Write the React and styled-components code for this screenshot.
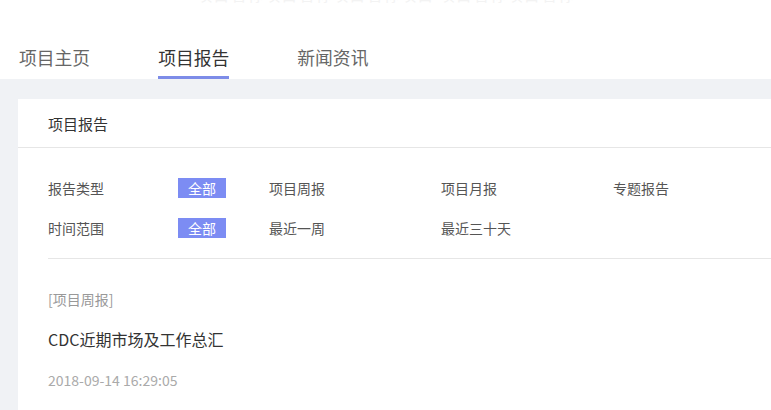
import React from "react";
import styled, { createGlobalStyle } from "styled-components";

const GlobalStyle = createGlobalStyle`
  html, body {
    margin: 0;
    padding: 0;
    background: #fff;
    overflow: hidden;
  }
  body {
    font-family: "Noto Sans CJK SC", "Noto Sans", sans-serif;
  }
`;

const Page = styled.div`
  width: 1200px;
  min-height: 410px;
  background: #f0f2f5;
`;

// the faint cut-off line of text at the very top
const Banner = styled.div`
  height: 6px;
  overflow: hidden;
  background: #fff;
  width: 771px;
  text-align: center;
`;

const BannerText = styled.div`
  margin-top: -14px;
  font-size: 16px;
  line-height: 16px;
  color: #f3f3f3;
  letter-spacing: 1px;
  white-space: nowrap;
`;

const Header = styled.div`
  height: 73px;
  background: #fff;
  display: flex;
  align-items: flex-end;
  padding-left: 19px;
  gap: 68px;
`;

const Tab = styled.div`
  font-size: 17.8px;
  line-height: 24px;
  padding-bottom: 7px;
  color: ${(p) => (p.active ? "#333" : "#666")};
  border-bottom: 3px solid ${(p) => (p.active ? "#7d8ce8" : "transparent")};
`;

const Card = styled.div`
  margin: 20px 0 0 18px;
  background: #fff;
  min-height: 320px;
`;

const CardHeader = styled.div`
  height: 48px;
  display: flex;
  align-items: center;
  padding-left: 30px;
  font-size: 15px;
  color: #333;
  border-bottom: 1px solid #e6e6e6;
`;

const Body = styled.div`
  padding: 0 30px;
`;

const Filters = styled.div`
  padding: 20px 0 10px;
  border-bottom: 1px solid #e6e6e6;
`;

const FilterRow = styled.div`
  display: grid;
  grid-template-columns: 130px 91px 172px 172px 172px;
  align-items: center;
  height: 40px;
  font-size: 14px;
  color: #555;
`;

const Badge = styled.span`
  display: inline-flex;
  align-items: center;
  justify-content: center;
  width: 48px;
  height: 20px;
  background: #7c8cf3;
  color: #fff;
  font-size: 14px;
`;

const Option = styled.span`
  color: #555;
`;

const Item = styled.div`
  padding-top: 30px;
`;

const ItemTag = styled.div`
  font-size: 14px;
  line-height: 20px;
  color: #999;
`;

const ItemTitle = styled.div`
  margin-top: 20px;
  font-size: 16px;
  line-height: 20px;
  color: #333;
`;

const ItemDate = styled.div`
  margin-top: 21px;
  font-size: 14px;
  line-height: 20px;
  color: #aaa;
`;

const filters = [
  { label: "报告类型", options: ["项目周报", "项目月报", "专题报告"] },
  { label: "时间范围", options: ["最近一周", "最近三十天"] },
];

export default function App() {
  return (
    <Page>
      <GlobalStyle />
      <Banner>
        <BannerText>项目名称项目名称项目名称项目 项目名称项目名称</BannerText>
      </Banner>
      <Header>
        <Tab>项目主页</Tab>
        <Tab active>项目报告</Tab>
        <Tab>新闻资讯</Tab>
      </Header>
      <Card>
        <CardHeader>项目报告</CardHeader>
        <Body>
          <Filters>
            {filters.map((f) => (
              <FilterRow key={f.label}>
                <span>{f.label}</span>
                <span>
                  <Badge>全部</Badge>
                </span>
                {f.options.map((o) => (
                  <Option key={o}>{o}</Option>
                ))}
              </FilterRow>
            ))}
          </Filters>
          <Item>
            <ItemTag>[项目周报]</ItemTag>
            <ItemTitle>CDC近期市场及工作总汇</ItemTitle>
            <ItemDate>2018-09-14 16:29:05</ItemDate>
          </Item>
        </Body>
      </Card>
    </Page>
  );
}
